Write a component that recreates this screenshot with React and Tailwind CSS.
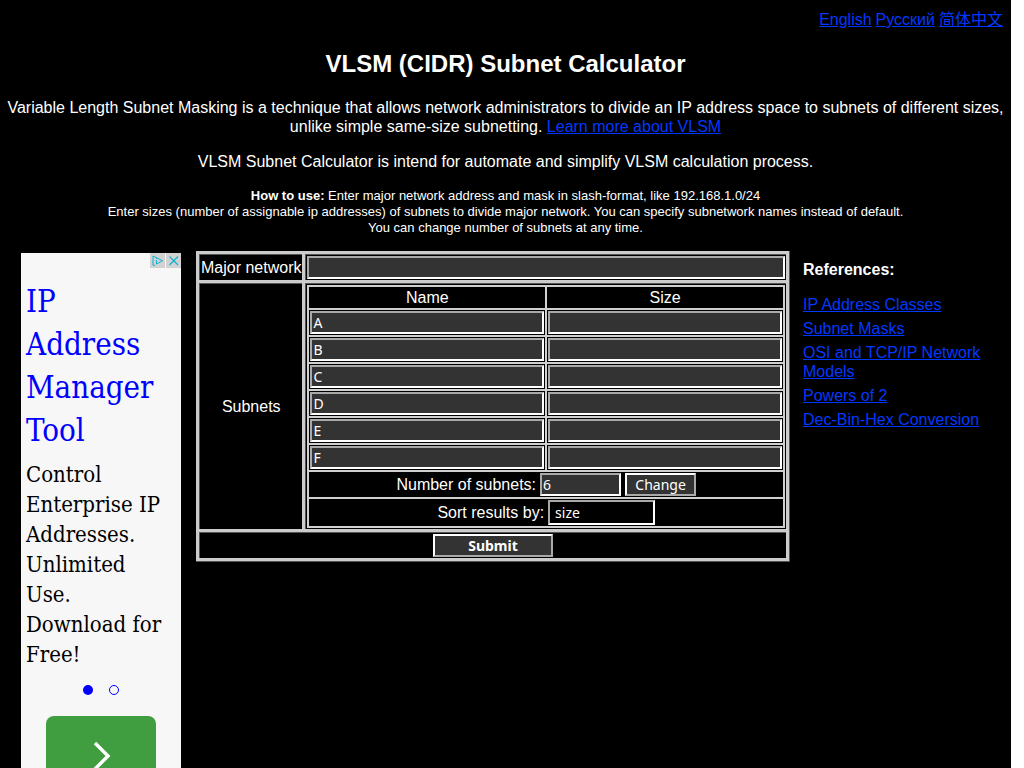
import { useState } from "react";

const languages = ["English", "Русский", "简体中文"];

const references = [
  "IP Address Classes",
  "Subnet Masks",
  "OSI and TCP/IP Network Models",
  "Powers of 2",
  "Dec-Bin-Hex Conversion",
];

const linkClass = "text-[#0038ff] underline";
const fieldClass =
  "block w-full h-[23px] px-px bg-[#333] text-white text-sm leading-[19px] font-['Noto_Sans',sans-serif] border-2 border-t-[#a9a9a9] border-l-[#a9a9a9] border-b-white border-r-white outline-none";
const buttonClass =
  "h-[23px] bg-[#333] text-white text-sm leading-[19px] font-['Noto_Sans',sans-serif] border-2 border-t-white border-l-white border-b-[#a9a9a9] border-r-[#a9a9a9]";
const outerCell = "bg-black border-t border-l border-[#555] p-px";
const innerCell = "bg-black p-px";

function AdBanner() {
  return (
    <aside className="relative w-40 shrink-0 mt-0.5 bg-[#f7f7f7] pt-[27px] pb-8 font-['DejaVu_Serif_Condensed','DejaVu_Serif',serif]">
      <div className="absolute top-0 right-0 flex gap-px">
        <button aria-label="Ad choices" className="size-[15px] bg-[#d2d2d2]">
          <svg viewBox="0 0 15 15" className="size-[15px]" fill="none" stroke="#14b1cf">
            <path d="M5 12.3H3V3L12.5 7.7L6.5 11V7" />
            <path d="M6.5 5v1" />
          </svg>
        </button>
        <button aria-label="Close ad" className="size-[15px] bg-[#d2d2d2]">
          <svg viewBox="0 0 15 15" className="size-[15px]" fill="none" stroke="#14b1cf">
            <path d="M3.5 3.5l8.5 8.5M12 3.5L3.5 12" strokeWidth="1.3" />
          </svg>
        </button>
      </div>
      <a href="#ad" className="block pl-[5px] pr-4 text-[31px] leading-[43px] text-[#0000ff]">
        IP Address Manager Tool
      </a>
      <p className="pl-[5px] pr-4 mt-2 text-[22px] leading-[30px] text-black">
        Control Enterprise IP Addresses. Unlimited Use. Download for Free!
      </p>
      <div className="flex justify-center gap-4 mt-[15px]">
        <button aria-label="Slide 1" className="size-2.5 rounded-full bg-[#0000ff]" />
        <button aria-label="Slide 2" className="size-2.5 rounded-full border border-[#0000ff]" />
      </div>
      <button
        aria-label="Next"
        className="block w-[110px] h-20 mx-auto mt-[21px] rounded-lg bg-[#409e40]"
      >
        <svg viewBox="0 0 110 80" className="w-full h-full" fill="none">
          <path d="M49 27L62 40L49 53" stroke="#fff" strokeWidth="3.4" />
        </svg>
      </button>
    </aside>
  );
}

function SubnetRow({ name }) {
  return (
    <tr>
      <td className={innerCell}>
        <input aria-label={`Subnet ${name} name`} className={fieldClass} defaultValue={name} />
      </td>
      <td className={innerCell}>
        <input aria-label={`Subnet ${name} size`} className={fieldClass} />
      </td>
    </tr>
  );
}

function SubnetTable() {
  const [count, setCount] = useState("6");
  const [names, setNames] = useState(["A", "B", "C", "D", "E", "F"]);

  const handleChange = () => {
    const total = Math.min(26, Math.max(1, Number(count) || 1));
    setNames(Array.from({ length: total }, (_, i) => String.fromCharCode(65 + i)));
  };

  return (
    <table className="w-full table-fixed border-separate border-spacing-[2px] bg-[#d0d0d0]">
      <thead>
        <tr>
          <th className={`${innerCell} font-normal`}>Name</th>
          <th className={`${innerCell} font-normal`}>Size</th>
        </tr>
      </thead>
      <tbody>
        {names.map((name) => (
          <SubnetRow key={name} name={name} />
        ))}
        <tr>
          <td colSpan={2} className={innerCell}>
            <div className="flex items-center justify-center gap-1">
              <label htmlFor="count">Number of subnets:</label>
              <div className="w-[81px]">
                <input
                  id="count"
                  className={fieldClass}
                  value={count}
                  onChange={(e) => setCount(e.target.value)}
                />
              </div>
              <button type="button" onClick={handleChange} className={`${buttonClass} w-[71px]`}>
                Change
              </button>
            </div>
          </td>
        </tr>
        <tr>
          <td colSpan={2} className={innerCell}>
            <div className="flex items-center justify-center gap-1">
              <label htmlFor="sort">Sort results by:</label>
              <select
                id="sort"
                className="appearance-none w-[107px] h-[25px] pl-[5px] bg-black text-white text-sm leading-[19px] font-['Noto_Sans',sans-serif] border-2 border-t-[#a9a9a9] border-l-[#a9a9a9] border-b-white border-r-white"
              >
                <option>size</option>
                <option>name</option>
              </select>
            </div>
          </td>
        </tr>
      </tbody>
    </table>
  );
}

function Calculator() {
  return (
    <form className="flex-1 min-w-0" onSubmit={(e) => e.preventDefault()}>
      <table className="w-full border-separate border-spacing-[3px] bg-[#ccc] border-r border-b border-[#555] text-center">
        <tbody>
          <tr>
            <td className={`${outerCell} w-px whitespace-nowrap`}>
              <label htmlFor="network">Major network</label>
            </td>
            <td className={outerCell}>
              <input id="network" className={fieldClass} />
            </td>
          </tr>
          <tr>
            <td className={outerCell}>Subnets</td>
            <td className={outerCell}>
              <SubnetTable />
            </td>
          </tr>
          <tr>
            <td colSpan={2} className={outerCell}>
              <button type="submit" className={`${buttonClass} block mx-auto w-[120px] font-bold`}>
                Submit
              </button>
            </td>
          </tr>
        </tbody>
      </table>
    </form>
  );
}

export default function App() {
  return (
    <div className="bg-white pr-[13px]">
      <div className="h-screen overflow-hidden bg-black text-white text-base leading-[19px] font-['Liberation_Sans','Noto_Sans_CJK_SC',sans-serif]">
        <nav className="flex justify-end gap-1 pt-2.5 pr-2">
          {languages.map((lang) => (
            <a key={lang} href="#lang" className={linkClass}>
              {lang}
            </a>
          ))}
        </nav>

        <header className="text-center">
          <h1 className="mt-[21px] text-2xl leading-7 font-bold">VLSM (CIDR) Subnet Calculator</h1>
          <p className="mt-5">
            Variable Length Subnet Masking is a technique that allows network administrators to
            divide an IP address space to subnets of different sizes, unlike simple same-size
            subnetting.{" "}
            <a href="#vlsm" className={linkClass}>
              Learn more about VLSM
            </a>
          </p>
          <p className="mt-4">
            VLSM Subnet Calculator is intend for automate and simplify VLSM calculation process.
          </p>
          <p className="mt-[17px] text-[13px] leading-4">
            <b>How to use:</b> Enter major network address and mask in slash-format, like
            192.168.1.0/24
            <br />
            Enter sizes (number of assignable ip addresses) of subnets to divide major network. You
            can specify subnetwork names instead of default.
            <br />
            You can change number of subnets at any time.
          </p>
        </header>

        <main className="flex items-start mt-[15px] pl-[21px] pr-2">
          <AdBanner />
          <div className="flex flex-1 min-w-0 ml-[15px] mr-[13px]">
            <Calculator />
          </div>
          <section className="w-[200px] shrink-0 pt-[9px]">
            <h2 className="font-bold">References:</h2>
            <ul className="flex flex-col gap-[5px] mt-4">
              {references.map((item) => (
                <li key={item}>
                  <a href="#ref" className={linkClass}>
                    {item}
                  </a>
                </li>
              ))}
            </ul>
          </section>
        </main>
      </div>
    </div>
  );
}
